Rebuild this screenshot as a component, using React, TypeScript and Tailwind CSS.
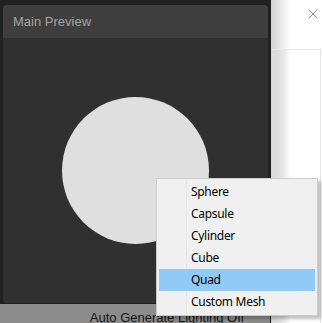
import React from "react";

const items = ["Sphere", "Capsule", "Cylinder", "Cube", "Quad", "Custom Mesh"];

export default function App() {
  return (
    <div
      className="relative w-[322px] h-[323px] overflow-hidden bg-[#212121] flex"
      style={{ fontFamily: '"Liberation Sans", Arial, sans-serif' }}
    >
      {/* left dark editor area */}
      <div className="w-[271px] h-full flex flex-col">
        <div className="pl-[3px] pt-[5px] w-[268px]">
          <div className="w-[265px] h-[298px] rounded-[4px] overflow-hidden flex flex-col">
            <div className="h-[33px] bg-[#3e3e3e] flex items-center pl-[10px] text-[13px] text-[#a3a3a3]">
              Main Preview
            </div>
            <div className="flex-1 bg-[#303030] flex items-center justify-center">
              <div className="w-[147px] h-[147px] rounded-full bg-[#dfdfdf]" />
            </div>
          </div>
        </div>
        <div className="mt-[1px] h-[4px] w-[270px] bg-[#bdbdbd]" />
        <div className="flex-1 w-[270px] bg-[#8c8c8c] flex justify-center pt-[4px] pl-[64px] text-[13px] text-[#141414] whitespace-nowrap">
          Auto Generate Lighting Off
        </div>
      </div>

      {/* right white panel */}
      <div className="relative flex-1 h-full bg-white">
        <div className="absolute inset-y-0 left-0 w-[20px] bg-gradient-to-r from-[#d2d2d2] to-[#ffffff00]" />
        <div className="absolute left-[37px] top-[9px] w-[10px] h-[10px]">
          <svg width="10" height="10" viewBox="0 0 10 10">
            <path d="M0.5 0.5L9.5 9.5M9.5 0.5L0.5 9.5" stroke="#8a8a8a" strokeWidth="1" />
          </svg>
        </div>
        <div className="absolute left-[1px] top-[49px] w-[49px] h-[280px] border border-[#e6e6e6]" />
        <div className="absolute left-[1px] top-[50px] w-[18px] h-[280px] bg-gradient-to-r from-[#dcdcdc] to-[#ffffff00]" />
      </div>

      {/* context menu */}
      <div
        className="absolute left-[156px] top-[178px] w-[162px] h-[138px] bg-[#f0f0f0] border border-[#cccccc] p-[2px] shadow-[3px_3px_3px_rgba(0,0,0,0.25)]"
        style={{ fontFamily: '"Noto Sans", "Open Sans", sans-serif' }}
      >
        <div className="absolute left-[29px] top-[2px] bottom-[2px] w-[1px] bg-[#e4e4e4]" />
        <div className="relative flex flex-col">
          {items.map((it) => (
            <div
              key={it}
              className={`h-[22px] flex items-center pl-[32px] text-[12px] tracking-[-0.3px] text-black ${
                it === "Quad" ? "bg-[#91c9f7]" : ""
              }`}
            >
              {it}
            </div>
          ))}
        </div>
      </div>
    </div>
  );
}
